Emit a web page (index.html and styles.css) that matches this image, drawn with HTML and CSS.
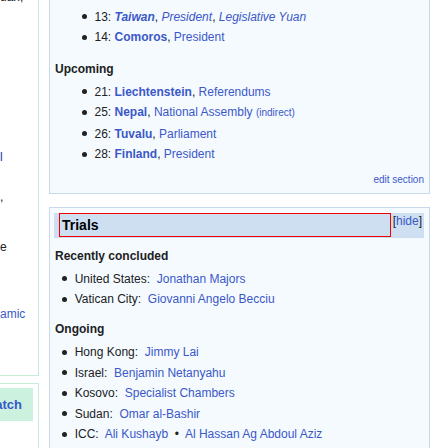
FILE: index.html
```html
<!DOCTYPE html>
<html lang="en">
<head>
<meta charset="utf-8">
<title>Current events</title>
<link rel="stylesheet" href="styles.css">
</head>
<body>
<div class="page">
  <aside class="side">
    <div class="side-box side-box-top">
      <div class="frag frag-1">uan,</div>
      <div class="frag frag-2 link-dark">l</div>
      <div class="frag frag-3">,</div>
      <div class="frag frag-4">e</div>
      <div class="frag frag-5 link">amic</div>
    </div>
    <div class="side-box side-box-bottom">
      <div class="watch"><span class="watch-text">Watch</span></div>
    </div>
  </aside>

  <main class="main">
    <section class="box box-elections">
      <ul class="list list-deep">
        <li>13: <a class="link" href="#"><b><i>Taiwan</i></b></a>, <a class="link" href="#"><i>President</i></a>, <a class="link" href="#"><i>Legislative Yuan</i></a></li>
        <li>14: <a class="link" href="#"><b>Comoros</b></a>, <a class="link" href="#">President</a></li>
      </ul>
      <div class="subhead subhead-upcoming">Upcoming</div>
      <ul class="list list-deep list-after-head">
        <li>21: <a class="link" href="#"><b>Liechtenstein</b></a>, <a class="link" href="#">Referendums</a></li>
        <li>25: <a class="link" href="#"><b>Nepal</b></a>, <a class="link" href="#">National Assembly</a> <small class="small link">(indirect)</small></li>
        <li>26: <a class="link" href="#"><b>Tuvalu</b></a>, <a class="link" href="#">Parliament</a></li>
        <li>28: <a class="link" href="#"><b>Finland</b></a>, <a class="link" href="#">President</a></li>
      </ul>
      <div class="edit"><a class="link" href="#">edit section</a></div>
    </section>

    <section class="box box-trials">
      <div class="box-head">
        <div class="box-title">Trials</div>
        <div class="hide">[<a class="link" href="#">hide</a>]</div>
      </div>
      <div class="subhead subhead-recent">Recently concluded</div>
      <ul class="list list-shallow list-after-head">
        <li>United States:&nbsp; <a class="link" href="#">Jonathan Majors</a></li>
        <li>Vatican City:&nbsp; <a class="link" href="#">Giovanni Angelo Becciu</a></li>
      </ul>
      <div class="subhead subhead-ongoing">Ongoing</div>
      <ul class="list list-shallow list-after-head">
        <li>Hong Kong:&nbsp; <a class="link" href="#">Jimmy Lai</a></li>
        <li>Israel:&nbsp; <a class="link" href="#">Benjamin Netanyahu</a></li>
        <li>Kosovo:&nbsp; <a class="link" href="#">Specialist Chambers</a></li>
        <li>Sudan:&nbsp; <a class="link" href="#">Omar al-Bashir</a></li>
        <li>ICC:&nbsp; <a class="link" href="#">Ali Kushayb</a> &nbsp;•&nbsp; <a class="link" href="#">Al Hassan Ag Abdoul Aziz</a></li>
      </ul>
    </section>
  </main>
</div>
</body>
</html>
```

FILE: styles.css
```css
html, body {
  margin: 0;
  padding: 0;
  background: #ffffff;
  overflow: hidden;
}

body {
  font-family: "Liberation Sans", Arial, sans-serif;
  font-size: 12px;
  color: #202122;
  width: 448px;
  height: 448px;
}

.page {
  display: flex;
  gap: 10px;
  margin-top: -20px;
  align-items: flex-start;
  width: 448px;
}

.link {
  color: #3a58c8;
  text-decoration: none;
}

.link-dark {
  color: #0b3d9c;
}

/* ---------- sidebar ---------- */
.side {
  flex: 0 0 39px;
  width: 39px;
  display: flex;
  flex-direction: column;
  gap: 7px;
}

.side-box {
  border: 1px solid #c4eed6;
  border-left: none;
  overflow: hidden;
  background: #ffffff;
}

.side-box-top {
  padding-top: 6px;
  box-sizing: border-box;
  height: 396px;
}

.frag {
  line-height: 20px;
  white-space: nowrap;
}

.frag-2 { margin-top: 140px; }
.frag-3 { margin-top: 20px; }
.frag-4 { margin-top: 30px; }
.frag-5 { margin-top: 47px; }

.side-box-bottom {
  height: 80px;
  padding-top: 4px;
}

.watch {
  width: 33px;
  height: 33px;
  background: #ccf2df;
  display: flex;
  justify-content: flex-end;
  align-items: center;
  overflow: hidden;
  padding-right: 11px;
  box-sizing: border-box;
}

.watch-text {
  font-weight: bold;
  font-size: 13px;
  color: #3a58c8;
  white-space: nowrap;
  flex: none;
}

/* ---------- main ---------- */
.main {
  flex: 0 0 381px;
  width: 381px;
  min-width: 381px;
  display: flex;
  flex-direction: column;
  gap: 13px;
}

.box {
  background: #f5faff;
  border: 1px solid #c8d9ee;
}

.box-elections {
  padding: 25.75px 5px 7.7px 0;
}

.box-trials {
  padding: 5px 5px 40px 0;
  height: 260px;
}

.list {
  list-style: none;
  margin: 0;
}

.list li {
  line-height: 20.5px;
  white-space: nowrap;
}

.list li::before {
  content: "";
  display: inline-block;
  width: 5px;
  height: 5px;
  border-radius: 50%;
  background: #202122;
  vertical-align: middle;
  margin-left: -12.5px;
  margin-right: 7.5px;
  position: relative;
  top: -1px;
}

.list-deep {
  padding-left: 44.5px;
}

.list-shallow {
  padding-left: 24.7px;
}

.list-after-head {
  margin-top: 3px;
}

.subhead {
  font-weight: bold;
  line-height: 20px;
  padding-left: 5px;
}

.subhead-upcoming { margin-top: 11px; }
.subhead-recent { margin-top: 7.7px; }
.subhead-ongoing { margin-top: 9.3px; }

.small {
  font-size: 10px;
}

.edit {
  margin-top: 8.85px;
  font-size: 10px;
  line-height: 12px;
  text-align: right;
}

.box-head {
  margin-left: 4px;
  background: #cedff2;
  height: 25px;
  display: flex;
  align-items: flex-start;
  padding-left: 5px;
  padding-right: 2px;
}

.box-title {
  flex: 1;
  height: 22px;
  border: 1px solid #ee0000;
  font-weight: bold;
  font-size: 14px;
  line-height: 22px;
  padding-left: 2px;
  color: #000;
}

.hide {
  margin-left: 2px;
  line-height: 16px;
  font-size: 12px;
  color: #202122;
}
```
